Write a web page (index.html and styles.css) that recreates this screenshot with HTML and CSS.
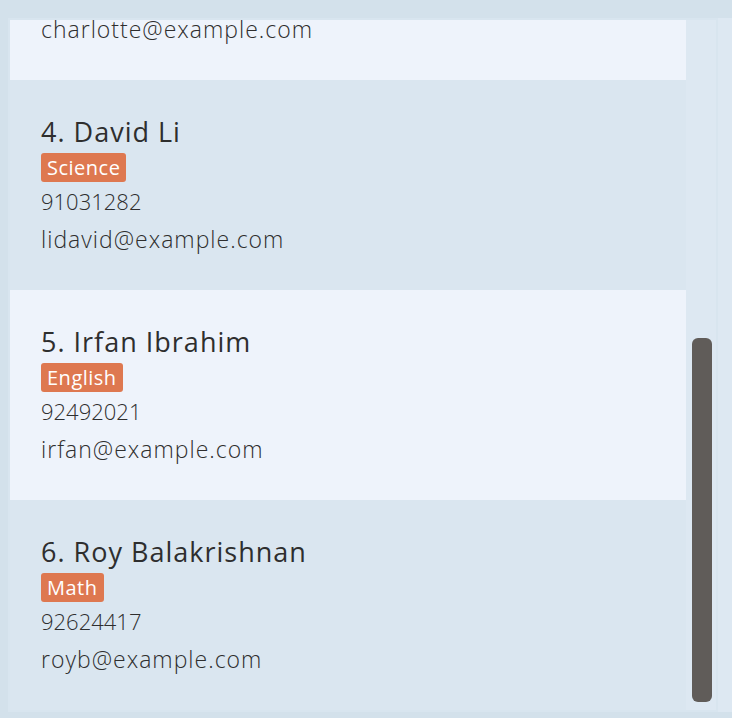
FILE: index.html
```html
<!DOCTYPE html>
<html>
<head>
<meta charset="utf-8">
<link rel="stylesheet" href="styles.css">
</head>
<body>
<div class="panel">
  <div class="viewport">
    <div class="list">
      <div class="card light">
        <div class="name">3. Charlotte Oliveiro</div>
        <div class="tags"><span class="tag">Science</span></div>
        <div class="phone">93210283</div>
        <div class="email">charlotte@example.com</div>
      </div>
      <div class="card dark">
        <div class="name">4. David Li</div>
        <div class="tags"><span class="tag">Science</span></div>
        <div class="phone">91031282</div>
        <div class="email">lidavid@example.com</div>
      </div>
      <div class="card light">
        <div class="name">5. Irfan Ibrahim</div>
        <div class="tags"><span class="tag">English</span></div>
        <div class="phone">92492021</div>
        <div class="email">irfan@example.com</div>
      </div>
      <div class="card dark">
        <div class="name">6. Roy Balakrishnan</div>
        <div class="tags"><span class="tag">Math</span></div>
        <div class="phone">92624417</div>
        <div class="email">royb@example.com</div>
      </div>
    </div>
    <div class="track"><div class="thumb"></div></div>
  </div>
  <div class="side"></div>
</div>
</body>
</html>
```
FILE: styles.css
```css
html, body {
  margin: 0;
  padding: 0;
}
body {
  background: #d3e1eb;
  padding: 18px 0 0 8px;
  height: 718px;
  box-sizing: border-box;
  overflow: hidden;
  font-family: "Open Sans", "Noto Sans", sans-serif;
  color: #2e2e2e;
}
.panel {
  display: flex;
  height: 694px;
  background: #d8e5ef;
}
.viewport {
  display: flex;
  margin: 2px;
  width: 706px;
}
.list {
  width: 676px;
  display: flex;
  flex-direction: column;
  justify-content: flex-end;
  overflow: hidden;
}
.card {
  flex-shrink: 0;
  height: 210px;
  box-sizing: border-box;
  padding: 35px 0 0 31px;
}
.card.light { background: #eef3fb; }
.card.dark { background: #dae6f0; }
.name {
  font-size: 27px;
  letter-spacing: 1px;
  line-height: 34px;
  height: 34px;
  white-space: nowrap;
}
.tags {
  display: flex;
  margin-top: 4px;
  height: 29px;
}
.tag {
  background: #de7850;
  color: #fff;
  font-size: 20px;
  letter-spacing: 0.5px;
  line-height: 29px;
  padding: 0 6px 0 6px;
  border-radius: 3px;
}
.phone {
  font-size: 22px;
  font-weight: 300;
  line-height: 38px;
}
.email {
  font-size: 23px;
  font-weight: 300;
  letter-spacing: 1px;
  line-height: 38px;
}
.track {
  width: 30px;
  background: #dde8f2;
  display: flex;
  flex-direction: column;
  justify-content: flex-end;
  padding: 0 0 8px 6px;
  box-sizing: border-box;
}
.thumb {
  width: 20px;
  height: 364px;
  background: #605c59;
  border-radius: 6px;
}
.side {
  flex: 1;
  background: #dde8f2;
}
```
